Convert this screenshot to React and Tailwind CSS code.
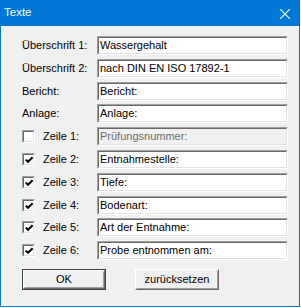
import React, { useState } from 'react';

const font = { fontFamily: '"Liberation Sans", Arial, sans-serif' };

// classic sunken 3D frame (text fields, check boxes)
const Sunken = ({ className = '', inner = 'bg-white', children }) => (
  <div className={`border border-t-[#a0a0a0] border-l-[#a0a0a0] border-b-white border-r-white ${className}`}>
    <div className={`h-full w-full border border-t-[#696969] border-l-[#696969] border-b-[#e3e3e3] border-r-[#e3e3e3] ${inner}`}>
      {children}
    </div>
  </div>
);

const Field = ({ value, disabled }) => (
  <Sunken className="h-[19px] w-[191px]" inner={disabled ? 'bg-[#f0f0f0]' : 'bg-white'}>
    <div className={`flex h-full items-center pl-[1px] text-[11px] leading-none ${disabled ? 'text-[#6d6d6d]' : 'text-black'}`}>
      {value}
    </div>
  </Sunken>
);

const CheckBox = ({ checked, onChange }) => (
  <button type="button" onClick={onChange} className="block">
    <Sunken className="h-[13px] w-[13px]">
      {checked && (
        <svg width="11" height="11" viewBox="0 0 11 11" className="block">
          <path d="M1.8 4.6 L4 6.8 L8.6 2.2" fill="none" stroke="#000" strokeWidth="2" />
        </svg>
      )}
    </Sunken>
  </button>
);

const Button = ({ label, isDefault }) => (
  <button
    type="button"
    className={`h-[21px] w-[84px] ${isDefault ? 'border border-[#404040]' : ''}`}
  >
    <div className="h-full w-full border border-t-white border-l-white border-b-[#696969] border-r-[#696969]">
      <div className="flex h-full w-full items-center justify-center border border-transparent border-b-[#a0a0a0] border-r-[#a0a0a0] bg-[#f0f0f0] text-[11px] leading-none text-black">
        {label}
      </div>
    </div>
  </button>
);

const headings = [
  ['Überschrift 1:', 'Wassergehalt'],
  ['Überschrift 2:', 'nach DIN EN ISO 17892-1'],
  ['Bericht:', 'Bericht:'],
  ['Anlage:', 'Anlage:'],
];

const zeilenText = [
  'Prüfungsnummer:',
  'Entnahmestelle:',
  'Tiefe:',
  'Bodenart:',
  'Art der Entnahme:',
  'Probe entnommen am:',
];

export default function App() {
  const [checked, setChecked] = useState([false, true, true, true, true, true]);

  const toggle = (i) => setChecked((c) => c.map((v, k) => (k === i ? !v : v)));

  return (
    <div className="h-[308px] w-[301px] bg-white" style={font}>
      <div className="flex h-[307px] w-[300px] flex-col bg-[#0078d7] px-[1px] pb-[1px]">
        {/* title bar */}
        <div className="flex h-[26px] shrink-0 items-center justify-between pl-[3px] pr-[9px] text-white">
          <span className="text-[11.5px] leading-none">Texte</span>
          <svg width="10" height="10" viewBox="0 0 10 10" className="mt-[1px]">
            <path d="M0 0 L10 10 M10 0 L0 10" stroke="#fff" strokeWidth="1.1" />
          </svg>
        </div>

        {/* body */}
        <div className="flex-1 bg-[#f0f0f0] pl-[21px] pt-[10px]">
          <div className="grid grid-cols-[75px_191px] gap-y-[3.8px]">
            {headings.map(([label, value]) => (
              <React.Fragment key={label}>
                <div className="flex h-[19px] items-center text-[11px] leading-none text-black">{label}</div>
                <Field value={value} />
              </React.Fragment>
            ))}
            {zeilenText.map((value, i) => (
              <React.Fragment key={i}>
                <div className="flex h-[19px] items-center gap-[8px] text-[11px] leading-none text-black">
                  <CheckBox checked={checked[i]} onChange={() => toggle(i)} />
                  <span>Zeile {i + 1}:</span>
                </div>
                <Field value={value} disabled={!checked[i]} />
              </React.Fragment>
            ))}
          </div>

          <div className="mt-[9px] flex gap-[29px]">
            <Button label="OK" isDefault />
            <Button label="zurücksetzen" />
          </div>
        </div>
      </div>
    </div>
  );
}
